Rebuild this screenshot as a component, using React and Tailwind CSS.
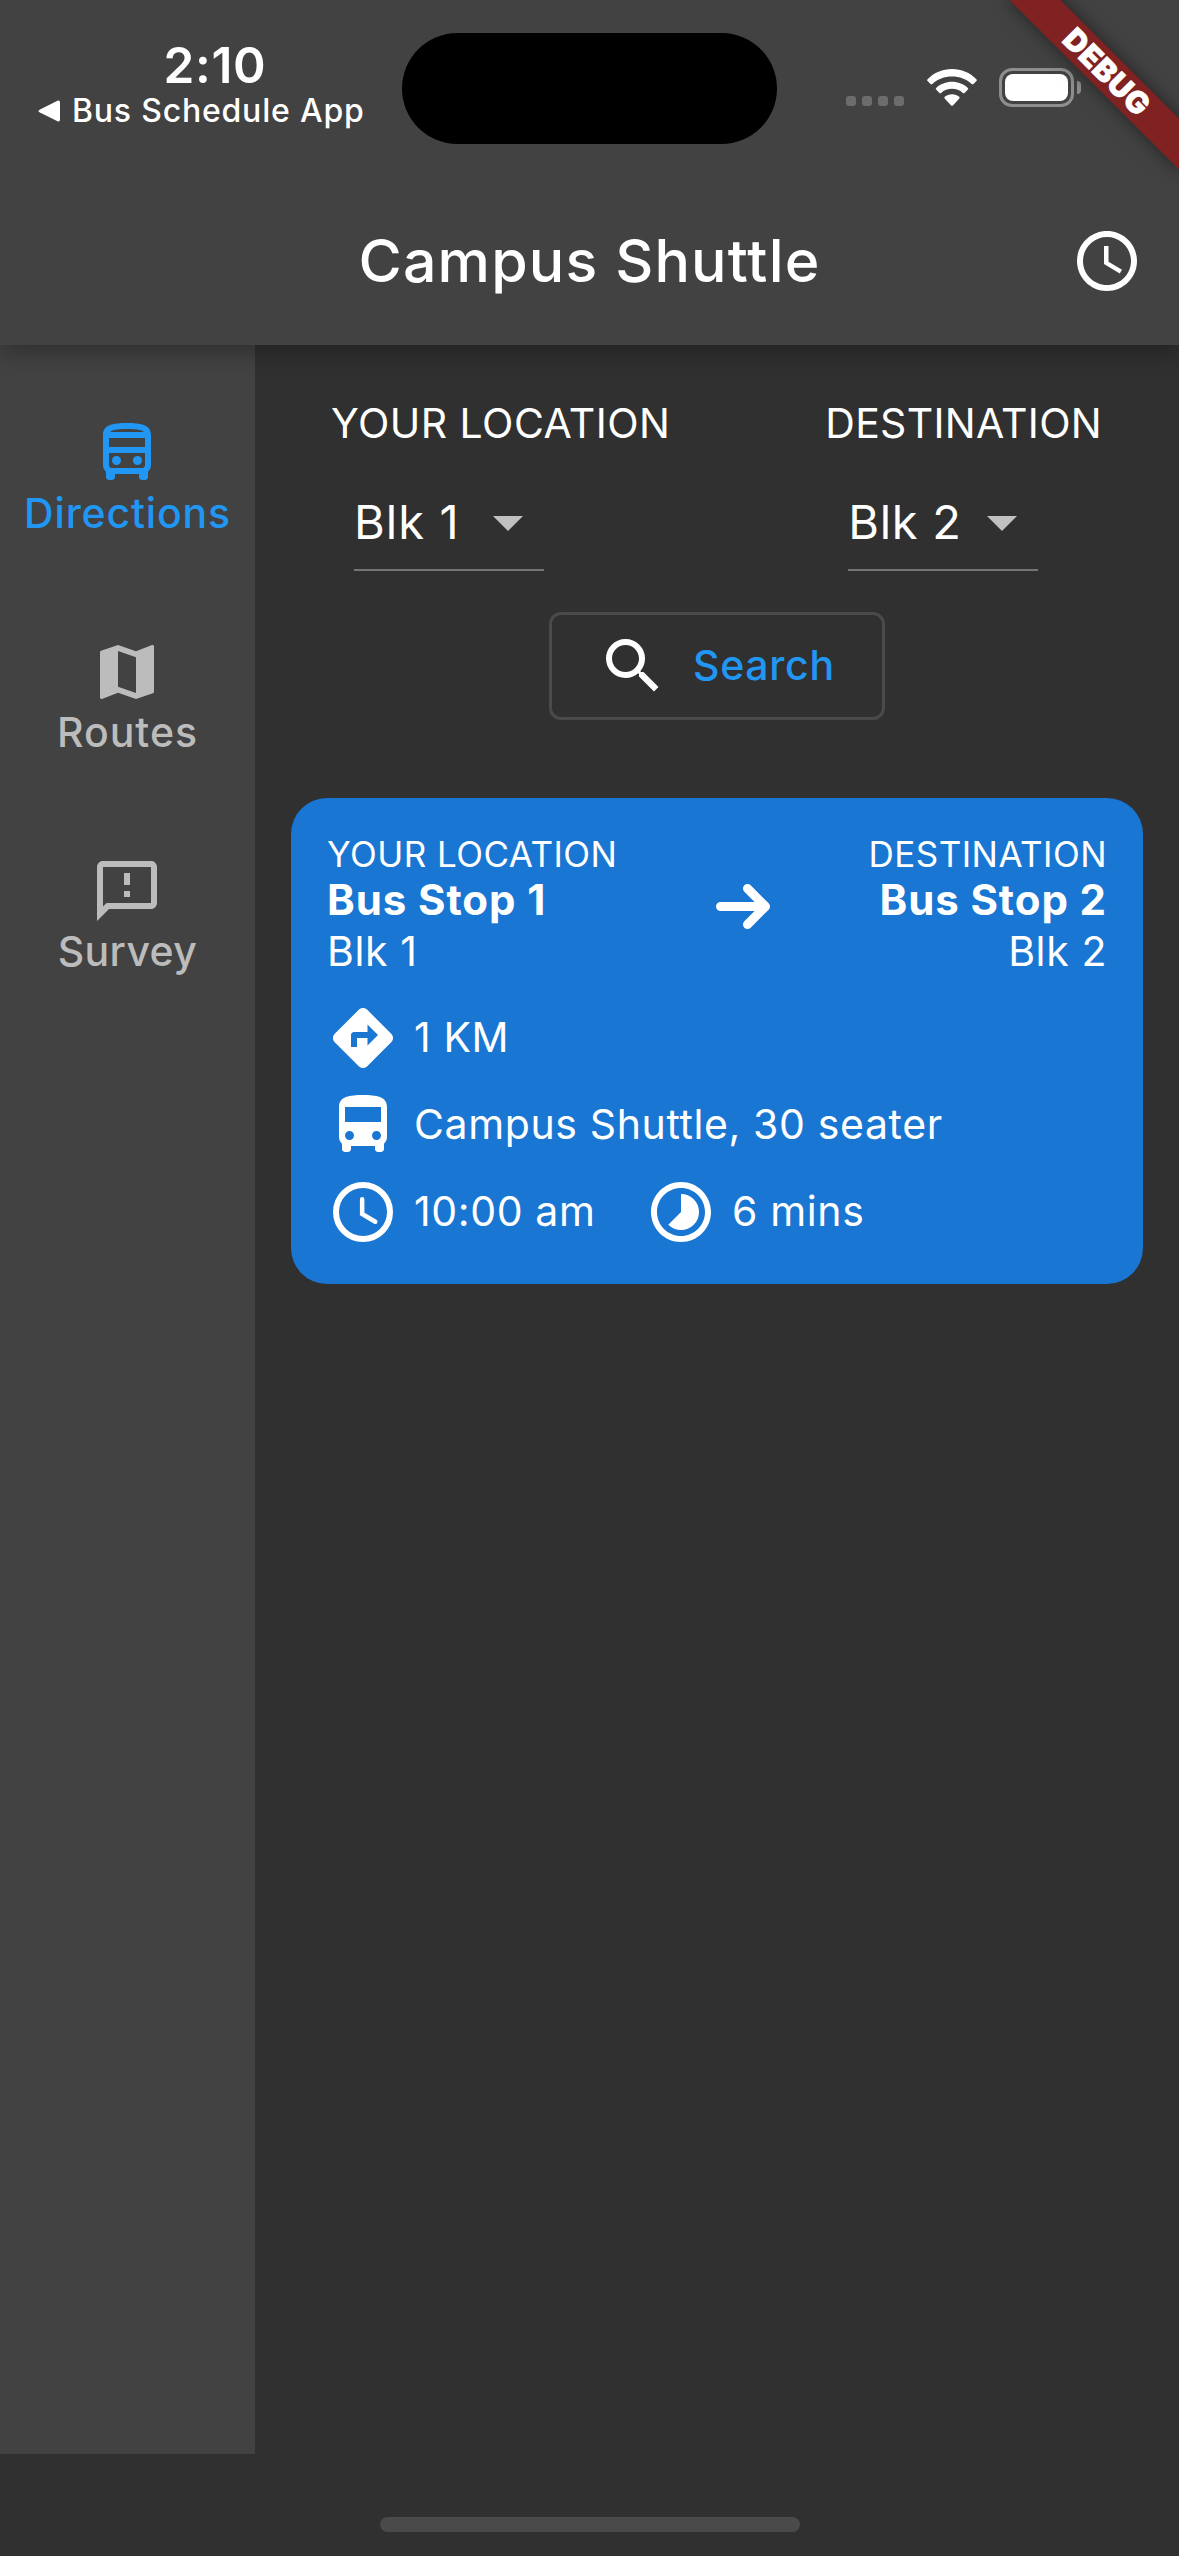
import {
  MdAccessTime,
  MdArrowDropDown,
  MdDirections,
  MdDirectionsBus,
  MdMap,
  MdOutlineDirectionsBus,
  MdOutlineFeedback,
  MdSearch,
  MdTimelapse,
} from "react-icons/md";

function WifiIcon() {
  return (
    <svg className="h-[38px] w-[50px]" viewBox="0 0 50 38" fill="white">
      <path d="M0.6 10.2C7 3.700 15.500 0 25 0s18 3.700 24.400 10.200c.6.6.6 1.200.1 1.700l-3.100 3.100c-.5.5-1.200.5-1.700 0C39.500 10 32.700 7.500 25 7.500S10.500 10 5.300 15c-.5.5-1.200.5-1.700 0L.5 11.900c-.5-.5-.5-1.100.1-1.700z" />
      <path d="M9.100 18.900C13.300 15 18.900 12.700 25 12.700s11.700 2.300 15.900 6.200c.5.5.5 1.100 0 1.700l-3.300 3.300c-.5.5-1.100.5-1.700 0-2.900-2.600-6.800-4.100-10.900-4.100s-8 1.500-10.900 4.100c-.6.5-1.200.5-1.700 0l-3.300-3.300c-.5-.6-.5-1.200 0-1.700z" />
      <path d="M17.800 27.800C19.700 26.200 22.200 25.300 25 25.300s5.300.9 7.200 2.500c.6.5.6 1.100.1 1.700l-6.400 6.900c-.6.6-1.200.6-1.800 0l-6.400-6.900c-.5-.6-.5-1.200.1-1.700z" />
    </svg>
  );
}

function BatteryIcon() {
  return (
    <div className="flex items-center gap-[3px]">
      <div className="h-[39px] w-[75px] rounded-[13px] border-3 border-[#8e8e8e] p-[3px]">
        <div className="h-full w-full rounded-[8px] bg-white" />
      </div>
      <div className="h-[13px] w-[4px] rounded-r-full bg-[#8e8e8e]" />
    </div>
  );
}

function RoundedClockIcon() {
  return (
    <svg className="size-[72px]" viewBox="0 0 24 24" fill="none" stroke="white">
      <circle cx="12" cy="12" r="9" strokeWidth="2" />
      <path d="M11.720 7.720V12.650L16.080 15.250" strokeWidth="1.500" strokeLinecap="round" />
    </svg>
  );
}

function ArrowIcon() {
  return (
    <svg className="h-[45px] w-[54px]" viewBox="0 0 54 45" fill="none" stroke="white" strokeWidth="9" strokeLinecap="round" strokeLinejoin="round">
      <path d="M4.500 22.500H49M31.500 4.500L49.500 22.500L31.500 40.500" />
    </svg>
  );
}

function StatusBar() {
  return (
    <div className="flex h-[177px]">
      <div className="flex w-[402px] flex-col pt-[35px]">
        <div className="pl-[163.500px] text-[49.500px] leading-[60px] font-semibold tracking-[0.650px]">2:10</div>
        <div className="flex items-center pl-[38px]">
          <svg className="h-[22px] w-[22px]" viewBox="0 0 22 22" fill="white">
            <path d="M1.500 9.700L19.500 0.800Q22 0 22 2.500V19.500Q22 22 19.500 21.200L1.500 12.300Q-.5 11 1.500 9.700z" />
          </svg>
          <span className="pl-[12px] text-[32px] leading-[32px] font-medium tracking-[0.790px]">Bus Schedule App</span>
        </div>
      </div>
      <div className="mt-[33px] h-[111px] w-[375px] rounded-full bg-black" />
      <div className="mt-[68px] flex h-[39px] grow items-center pl-[69px]">
        <div className="mt-[27px] flex gap-[6px]">
          {[0, 1, 2, 3].map((dot) => (
            <div key={dot} className="size-[10px] rounded-[3px] bg-[#6c6c6c]" />
          ))}
        </div>
        <div className="ml-[23px]">
          <WifiIcon />
        </div>
        <div className="ml-[22px]">
          <BatteryIcon />
        </div>
      </div>
    </div>
  );
}

function NavItem({ icon: Icon, label, active, tracking }) {
  return (
    <div className={`flex flex-col items-center ${active ? "text-[#2196f3]" : "text-[#bcbcbc]"}`}>
      <Icon className="mr-[1px] size-[72px]" />
      <span className={`text-[41px] leading-[48px] font-medium ${tracking}`}>{label}</span>
    </div>
  );
}

function StopPicker({ label, value, tracking, labelTracking }) {
  return (
    <div className="flex flex-col">
      <span className={`text-[41px] leading-[48px] ${labelTracking}`}>{label}</span>
      <div className="mt-[39px] ml-[23px] flex w-[190px] items-center justify-between border-b-2 border-[#757575] pb-[11px]">
        <span className={`text-[47px] leading-[72px] whitespace-nowrap ${tracking}`}>{value}</span>
        <MdArrowDropDown className="-ml-[20px] size-[72px] shrink-0 text-[#c1c1c1]" />
      </div>
    </div>
  );
}

function StopSummary({ label, stop, block, align }) {
  return (
    <div className={`flex flex-col ${align}`}>
      <span className="text-[35px] leading-[41px] tracking-[0.450px]">{label}</span>
      <span className="text-[42px] leading-[50px] font-bold tracking-[0.900px]">{stop}</span>
      <span className="text-[41px] leading-[52px] tracking-[0.600px]">{block}</span>
    </div>
  );
}

function Detail({ icon, text }) {
  return (
    <div className="flex items-center gap-[15px]">
      {icon}
      <span className="-mt-[2px] text-[41px] leading-[70px] tracking-[0.620px]">{text}</span>
    </div>
  );
}

export default function App() {
  return (
    <div className="relative flex h-[2556px] w-[1179px] flex-col overflow-hidden bg-[#303030] font-[Inter,sans-serif] text-white">
      <header className="relative z-10 h-[345px] shrink-0 bg-[#424242] shadow-[0_6px_24px_rgba(0,0,0,0.32)]">
        <StatusBar />
        <div className="grid h-[168px] grid-cols-[1fr_auto_1fr] items-center px-[36px]">
          <div />
          <h1 className="text-[59px] leading-[72px] font-medium tracking-[1.150px]">Campus Shuttle</h1>
          <MdAccessTime className="size-[72px] justify-self-end" />
        </div>
      </header>

      <div className="flex h-[2109px]">
        <nav className="flex w-[255px] shrink-0 flex-col gap-[99px] bg-[#424242] pt-[72px]">
          <NavItem icon={MdOutlineDirectionsBus} label="Directions" active tracking="tracking-[0.840px]" />
          <NavItem icon={MdMap} label="Routes" tracking="tracking-[0.980px]" />
          <NavItem icon={MdOutlineFeedback} label="Survey" tracking="tracking-[0.360px]" />
        </nav>

        <main className="flex grow flex-col pt-[54px]">
          <div className="flex justify-between pr-[77px] pl-[76px]">
            <StopPicker label="YOUR LOCATION" value="Blk 1" labelTracking="tracking-[0.470px]" tracking="tracking-[1.100px]" />
            <StopPicker label="DESTINATION" value="Blk 2" labelTracking="tracking-[0.300px]" tracking="tracking-[0.700px]" />
          </div>

          <button className="mt-[41px] flex h-[108px] w-[336px] items-center gap-[24px] self-center rounded-[12px] border-3 border-[#4a4a4a] pl-[45px]">
            <MdSearch className="size-[72px]" />
            <span className="-mt-[2px] text-[41px] leading-[48px] font-medium tracking-[0.680px] text-[#2196f3]">Search</span>
          </button>

          <section className="mx-[36px] mt-[78px] flex h-[486px] flex-col rounded-[36px] bg-[#1976d2] p-[36px]">
            <div className="flex justify-between">
              <StopSummary label="YOUR LOCATION" stop="Bus Stop 1" block="Blk 1" align="items-start" />
              <div className="mt-[50px]">
                <ArrowIcon />
              </div>
              <StopSummary label="DESTINATION" stop="Bus Stop 2" block="Blk 2" align="items-end" />
            </div>
            <div className="mt-[25px] flex flex-col gap-[15px]">
              <Detail icon={<MdDirections className="size-[72px]" />} text="1 KM" />
              <Detail icon={<MdDirectionsBus className="size-[72px]" />} text="Campus Shuttle, 30 seater" />
              <div className="flex gap-[49.500px]">
                <Detail icon={<RoundedClockIcon />} text="10:00 am" />
                <Detail icon={<MdTimelapse className="size-[72px]" />} text="6 mins" />
              </div>
            </div>
          </section>
        </main>
      </div>

      <div className="mt-[63px] h-[15px] w-[420px] self-center rounded-full bg-[#4a4a4a]" />

      <div className="absolute top-[54px] left-[987px] z-20 flex h-[36px] w-[240px] rotate-45 items-center justify-center bg-[#802122] shadow-[0_0_18px_rgba(0,0,0,0.5)]">
        <span className="text-[30.500px] leading-[36px] font-black tracking-[0.500px] [-webkit-text-stroke:0.6px_white]">DEBUG</span>
      </div>
    </div>
  );
}
